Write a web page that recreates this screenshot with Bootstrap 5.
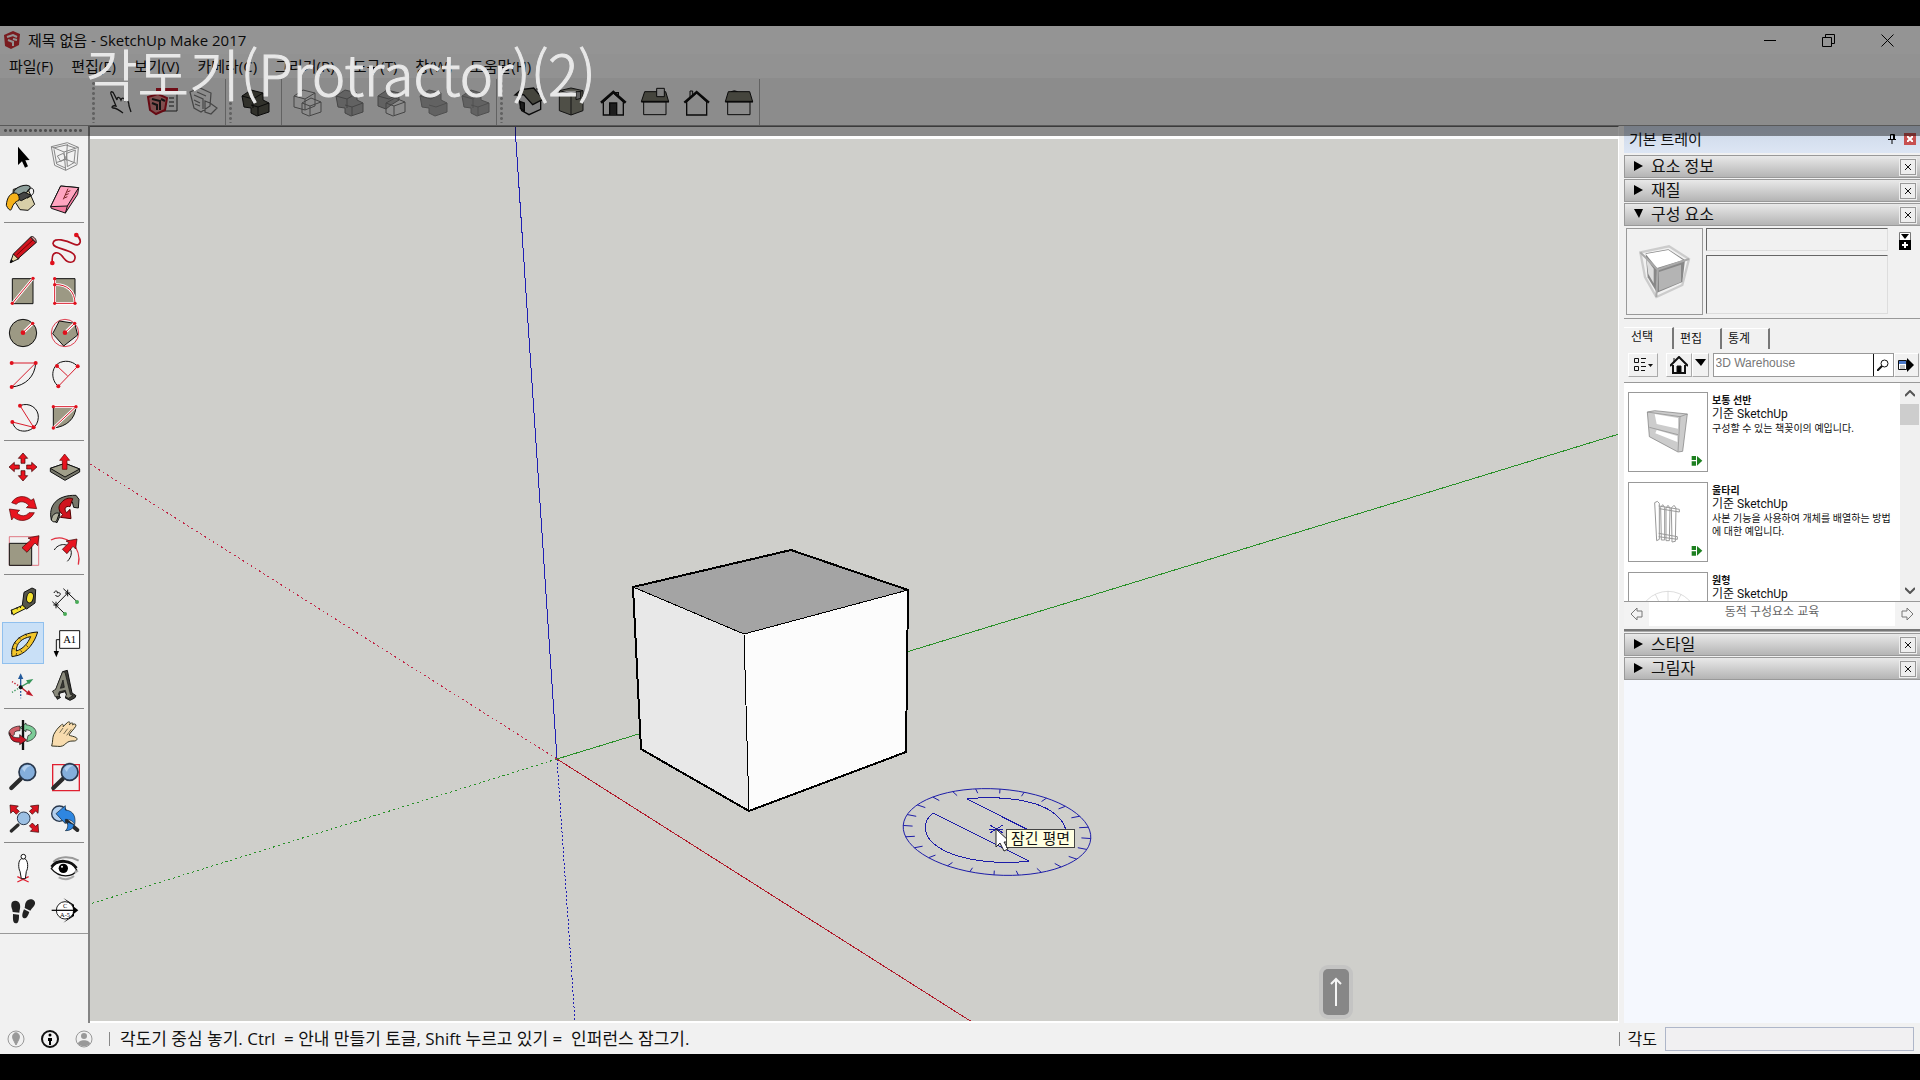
<!DOCTYPE html>
<html lang="ko">
<head>
<meta charset="utf-8">
<meta name="viewport" content="width=device-width, initial-scale=1">
<title>제목 없음 - SketchUp Make 2017</title>
<link href="https://cdn.jsdelivr.net/npm/bootstrap@5.3.0/dist/css/bootstrap.min.css" rel="stylesheet">
<style>
  body { font-family: "Open Sans", "Noto Sans CJK KR", sans-serif; font-size: 15px; line-height: 20px; color: #111; background: #000; }
  button { color: inherit; }
  svg { display: block; }
  .letterbox { height: 26px; }
  .app-window { background: #f1f1f1; min-height: 0; }
  .title-row { height: 28px; background: #fff; padding: 0 3px 0 4px; }
  .title-row .caption-btn { width: 59px; height: 28px; }
  .menu-row { height: 24px; background: #fcfcfc; }
  .menu-row a { color: #111; text-decoration: none; padding: 0 9px; white-space: nowrap; }
  .plain-btn { border: 0; background: none; padding: 0; display: flex; align-items: center; justify-content: center; }
  .tools-row { height: 48px; padding-left: 92px; border-bottom: 1px solid #999; }
  .tools-row .grip { width: 3px; height: 42px; margin: 0 4px 0 0; background: radial-gradient(circle, #aaa 1px, transparent 2px) 0 0 / 3px 5px; }
  .tools-row .bar { width: 1px; height: 46px; background: #aaa; }
  .tools-row .bar + .grip { margin-left: 3px; }
  .tools-row .bar-inner { margin: 0 4px 0 3px; }
  .tool-btn { width: 42px; height: 42px; }
  .tool-btn.picked { background: #c9e0f7; box-shadow: inset 0 0 0 1px #90c0ee; }
  .side-tools { width: 90px; border-right: 2px solid #848484; }
  .side-grip { height: 3px; margin: 3px 4px 4px 3px; background: radial-gradient(circle, #888 1px, transparent 2px) 0 0 / 5px 3px; }
  .side-set { width: 84px; margin-left: 2px; }
  .side-rule { height: 8px; padding: 2px 4px 0 4px; }
  .side-rule::before { content: ""; display: block; height: 1px; background: #888; }
  .side-end { border-bottom: 1px solid #999; height: 2px; }
  .scene { min-width: 0; background: #cfcfcb; border-top: 1px solid #666; border-right: 1px solid #fff; border-bottom: 2px solid #fff; overflow: hidden; }
  .scene > svg { width: 100%; height: 100%; }
  .hint { left: 916px; top: 702px; height: 19px; padding: 0 4px; border: 1px solid #444; background: #ffffe1; line-height: 17px; white-space: nowrap; }
  .key-cap { left: 1233px; bottom: 6px; width: 26px; height: 46px; border-radius: 5px; background: #878787; box-shadow: 0 0 0 4px #c4c4c3; }
  .tray { width: 296px; margin-left: 5px; background: #f1f1f1; }
  .tray-head { height: 27px; margin-bottom: 2px; padding: 0 4px 2px 5px; background: linear-gradient(#ccd7e8, #dde6f4); }
  .tray-head .pin-close { width: 12px; height: 12px; background: #c75050; }
  .fold { height: 23px; margin-bottom: 1px; padding: 0 4px 0 9px; border: 1px solid #999; border-right: 0; background: linear-gradient(#e9e9e9, #b4b4b4); }
  .fold .fold-name { gap: 8px; font-size: 16px; height: 21px; padding-bottom: 2px; }
  .fold .fold-x { width: 16px; height: 16px; border: 1px solid #999; background: #eee; box-shadow: 0 0 0 1px #eee; }
  .comp-info { height: 93px; padding: 2px 9px 4px 2px; gap: 3px; border-bottom: 1px solid #999; }
  .comp-thumb { width: 77px; height: 87px; border: 1px solid #999; }
  .sunk { border: 1px solid; border-color: #666 #ddd #ddd #666; background: #f1f1f1; border-radius: 0; resize: none; display: block; width: 100%; padding: 0 4px; }
  .tab-row { padding-top: 8px; height: 30px; gap: 1px; }
  .tab-row button { font-size: 12px; line-height: 16px; width: 47px; height: 21px; padding: 0 0 0 5px; text-align: left; border: 0; border-right: 2px solid #777; border-top: 1px solid #fff; background: #f1f1f1; }
  .tab-row button:first-child { width: 50px; padding: 0 0 3px 7px; height: 22px; }
  .find-row { height: 34px; padding: 4px 1px 0 4px; border-bottom: 1px solid #999; }
  .raised { height: 24px; border: 1px solid; border-color: #fff #aaa #aaa #fff; background: #f1f1f1; }
  .find-box { height: 24px; border: 1px solid #999; background: #fff; }
  .find-box input { width: 159px; height: 18px; border: 0; padding: 0 2px; font: 12px "Liberation Sans", sans-serif; color: #777; }
  .find-box button { width: 20px; border-left: 1px solid #111; height: 22px; }
  .models { height: 219px; overflow: hidden; background: #fff; border-bottom: 1px solid #999; }
  .model-list { padding: 9px 0 0 4px; }
  .model-row { height: 90px; gap: 4px; font-size: 10px; line-height: 13px; }
  .model-row .pic { width: 80px; height: 80px; border: 1px solid #999; flex: none; }
  .model-row .txt { width: 180px; padding-top: 2px; }
  .model-row b, .model-row span { display: block; }
  .model-row .kit { font-family: Roboto, "Noto Sans CJK KR", sans-serif; font-size: 12px; line-height: 15px; }
  .rail { width: 20px; background: #f0f0f0; }
  .rail .rail-thumb { height: 21px; background: #cdcdcd; margin-right: 1px; }
  .pager { height: 24px; background: #fff; font-size: 12px; color: #666; }
  .pager .plain-btn { width: 25px; height: 24px; background: #f3f3f3; }
  .tray-gap { height: 7px; padding-top: 3px; }
  .tray-gap::before { content: ""; display: block; height: 3px; border-top: 2px solid #777; border-bottom: 1px solid #aaa; }
  .tray-rest { background: #f5f8fe; }
  .status-row { height: 31px; padding: 0 6px 0 7px; font-size: 17px; }
  .status-row .tick-bar { width: 1px; height: 14px; background: #888; }
  .status-row .tip { white-space: pre; margin-left: 10px; }
  .status-row label { font-size: 16px; }
  .status-row input { width: 249px; height: 24px; border: 1px solid #aeb6c9; background: #f1f0f2; }
  .lesson { left: 0; right: 0; top: 26px; height: 110px; background: rgba(0,0,0,.42); pointer-events: none; }
  .lesson h1 { margin: 16px 0 0 86px; font: 300 56px/60px "Noto Sans CJK KR", sans-serif; color: #e8e8e8; -webkit-text-stroke: 1px #e8e8e8; }
</style>
<script src="https://cdn.jsdelivr.net/npm/bootstrap@5.3.0/dist/js/bootstrap.bundle.min.js"></script>
</head>
<body class="vh-100 d-flex flex-column overflow-hidden position-relative">
<div class="letterbox flex-shrink-0"></div>
<div class="app-window flex-grow-1 d-flex flex-column">

  <header class="flex-shrink-0">
    <div class="title-row d-flex align-items-center">
      <svg width="16" height="18" viewBox="0 0 16 18"><path d="M0 4 9 0l7 3-1 11-8 4-6-3z" fill="#d03036"/><path d="M3 6l6-2 4 2M4 9l5 2v4M9 8l4 1" stroke="#fff" stroke-width="2" fill="none"/></svg>
      <span class="ms-2">제목 없음 - SketchUp Make 2017</span>
      <div class="d-flex ms-auto">
        <button class="plain-btn caption-btn" aria-label="최소화"><svg width="12" height="12"><path d="M0 6.500h12" stroke="#000"/></svg></button>
        <button class="plain-btn caption-btn" aria-label="이전 크기로"><svg width="13" height="13" fill="none" stroke="#000"><path d="M.5 3.500h9v9h-9zM3.500 3.500v-3h9v9h-3"/></svg></button>
        <button class="plain-btn caption-btn" aria-label="닫기"><svg width="13" height="13" stroke="#000"><path d="M.5.5l12 12M12.500.5l-12 12"/></svg></button>
      </div>
    </div>
    <nav class="menu-row d-flex align-items-center">
      <a href="#">파일(F)</a><a href="#">편집(E)</a><a href="#">보기(V)</a><a href="#">카메라(C)</a><a href="#">그리기(R)</a><a href="#">도구(T)</a><a href="#">창(W)</a><a href="#">도움말(H)</a>
    </nav>
    <div class="tools-row d-flex align-items-center">
      <span class="grip"></span>
      <button class="plain-btn tool-btn" aria-label="상호 작용"><svg width="42" height="42" fill="none" stroke="#222" stroke-width="1.300"><path d="M24 32c-5-4-8-5-10-5s-1-3 3-2l-5-12c-1-3 2-3 3 0l3 6c0-4 3-3 4 0 1-3 4-2 4 1 3-2 4 2 4 5l2 6"/></svg></button>
      <button class="plain-btn tool-btn" aria-label="구성요소 옵션"><svg width="42" height="42"><path d="M16 8h20v22H22" fill="#eee" stroke="#333"/><path d="M15 7h22v5H15z" fill="#c01828"/><path d="M7 16l10-3 9 4-2 12-9 4-6-4z" fill="#d88" stroke="#b01020" stroke-width="2"/><path d="M11 18l8 2v9M11 22l5 2v5M20 18l4 2" stroke="#222" stroke-width="2" fill="none"/><path d="M28 17h5M28 21h5M28 25h5" stroke="#222"/></svg></button>
      <button class="plain-btn tool-btn" aria-label="구성요소 특성"><svg width="42" height="42" fill="none" stroke="#777" stroke-width="1.200"><path d="M7 11l10-4 11 5-1 13-9 6-7-4zM11 14l9 4v10M14 11l9 4M11 19l6 3M12 23l5 2M22 20l5 2 7 5-6 6-6-2z"/></svg></button>
      <span class="bar"></span><span class="grip"></span>
      <button class="plain-btn tool-btn" aria-label="외부 셸"><svg width="42" height="42" fill="#55554b" stroke="#111"><path d="M6 15l9-6 12 3v7l6 3v9l-12 4-6-3v-5l-7-1z"/><path d="M6 15l11 3 10-6M17 18v9M15 24l7 2 11-4M22 26v8" fill="none"/></svg></button>
      <span class="bar bar-inner"></span>
      <button class="plain-btn tool-btn" aria-label="교차"><svg width="42" height="42" fill="none" stroke="#777"><path d="M8 15l9-6 12 3v13l-10 4-11-3zM8 15l11 3 10-6M19 18v11M16 22l9-5 10 4v10l-12 4-7-3zM16 22l8 3 11-4M24 25v9"/></svg></button>
      <button class="plain-btn tool-btn" aria-label="결합"><svg width="42" height="42" fill="#aaa" stroke="#777"><path d="M8 15l9-6 12 3v7l6 3v9l-12 4-6-3v-5l-7-1z"/><path d="M8 15l11 3 10-6M19 18v9M17 24l7 2 11-4M24 26v8" fill="none"/></svg></button>
      <button class="plain-btn tool-btn" aria-label="빼기"><svg width="42" height="42" fill="none" stroke="#777"><path d="M8 15l9-6 12 3v7l-8 5-5 4-8-3z" fill="#aaa"/><path d="M8 15l11 3 10-6M16 22l9-5 10 4v10l-12 4-7-3zM16 22l8 3 11-4M24 25v9"/></svg></button>
      <button class="plain-btn tool-btn" aria-label="자르기"><svg width="42" height="42" fill="#aaa" stroke="#888"><path d="M8 15l9-6 12 3v7l6 3v9l-12 4-6-3v-5l-7-1z"/><path d="M8 15l11 3 10-6M17 24l7 2 11-4" fill="none"/></svg></button>
      <button class="plain-btn tool-btn" aria-label="분할"><svg width="42" height="42" fill="#aaa" stroke="#888"><path d="M8 15l9-6 10 3v7l8 3v9l-12 4-6-3v-5l-7-1z"/><path d="M8 15l11 3 8-6M19 18v9M17 24l7 2 11-4M24 26v8" fill="none"/></svg></button>
      <span class="bar"></span><span class="grip"></span>
      <button class="plain-btn tool-btn" aria-label="등각"><svg width="42" height="42" viewBox="78 66 126 126" stroke="#111" stroke-width="4"><path d="M110 105l12 50 22 12 35-16v-30l-25-22z" fill="#ddd"/><path d="M102 108l18-16 38-5 30 35-10 3-23 12-27-30-12 2z" fill="#77776a"/><path d="M166 90h10v16" fill="#ddd"/><path d="M118 128l12 4v24l-12-8z" fill="#333"/></svg></button>
      <button class="plain-btn tool-btn" aria-label="위"><svg width="42" height="42" viewBox="204 66 126 126" stroke="#222" stroke-width="3" fill="#88887a"><path d="M235 95l35-8 36 8v60l-36 13-35-13zM235 95l35 9 36-9M270 104v64"/><path d="M285 98h14v20l-14 4z" fill="#aaa"/></svg></button>
      <button class="plain-btn tool-btn" aria-label="앞"><svg width="42" height="42" viewBox="330 66 126 126" stroke="#111" stroke-width="4"><path d="M367 128v40h60v-40l-30-27z" fill="#eee"/><path d="M386 168v-36h21v36" fill="#333"/><path d="M404 104v-3h8v11" fill="none"/><path d="M360 131l37-32 37 32" fill="none" stroke-width="8"/></svg></button>
      <button class="plain-btn tool-btn" aria-label="오른쪽"><svg width="42" height="42" viewBox="456 66 126 126" stroke="#111" stroke-width="3"><path d="M488 128h67v39h-67z" fill="#eee"/><path d="M491 98h63l9 30h-82z" fill="#77776a"/><path d="M481 128h83" stroke-width="5"/><path d="M527 88h23v25h-23z" fill="#ddd"/></svg></button>
      <button class="plain-btn tool-btn" aria-label="뒤"><svg width="42" height="42" viewBox="582 66 126 126" stroke="#111" stroke-width="4"><path d="M617 128v40h60v-40l-30-27z" fill="#eee"/><path d="M627 114V96h8v12" fill="#ddd" stroke-width="3"/><path d="M610 131l37-32 37 32" fill="none" stroke-width="7"/></svg></button>
      <button class="plain-btn tool-btn" aria-label="왼쪽"><svg width="42" height="42" viewBox="708 66 126 126" stroke="#111" stroke-width="3"><path d="M740 128h67v39h-67z" fill="#eee"/><path d="M750 98q10-5 20 0" fill="#555"/><path d="M742 98h64l9 30h-82z" fill="#77776a"/><path d="M733 128h83" stroke-width="5"/></svg></button>
      <span class="bar"></span>
    </div>
  </header>

  <main class="d-flex flex-grow-1" style="min-height:0">
    <aside class="side-tools flex-shrink-0">
      <div class="side-grip"></div>
      <div class="side-set d-flex flex-wrap">
        <button class="plain-btn tool-btn" aria-label="선택"><svg width="42" height="42" viewBox="6 18 126 126"><path d="M54 50v55l12-11 9 19 9-4-8-18 13-1z"/></svg></button>
        <button class="plain-btn tool-btn" aria-label="구성 요소 만들기"><svg width="42" height="42" viewBox="132 18 126 126" fill="none" stroke="#888" stroke-width="3"><path d="M154 50l48-12 33 14-4 52-34 17-33-15zM154 50l38 16 43-14M192 66l5 55M160 54l38-9 28 9M162 58l8 44 26 12M202 42l-3 50M168 98l30-10 30 12M200 70l26-10-4 38-20 12zM172 78l18-8 8 14-16 10z"/></svg></button>
        <button class="plain-btn tool-btn" aria-label="페인트통"><svg width="42" height="42" viewBox="6 144 126 126" stroke="#111" stroke-width="3"><path d="M40 178l40-10 24 55-20 18-24-2-22-35z" fill="#d8cfa8"/><ellipse cx="66" cy="180" rx="26" ry="12" fill="#8ea09c" transform="rotate(-20 66 180)"/><path d="M42 202l30-16 22 10-30 16z" fill="#444"/><path d="M82 185c4-14 18-14 19-2s-12 16-19 22" fill="none"/><path d="M50 190c-18-6-30 14-31 36 6 14 14 18 16 10 4-14 14-24 21-24 4-8 0-18-6-22z" fill="#f6b21a"/></svg></button>
        <button class="plain-btn tool-btn" aria-label="지우개"><svg width="42" height="42" viewBox="132 144 126 126" stroke="#111" stroke-width="3"><path d="M152 230l30-62 54 5-3 20-37 56-42-14z" fill="#f47ba0"/><path d="M152 230l30-62 54 5-34 55z" fill="#ffa5c0"/><path d="M202 228l-6 22" fill="none"/><path d="M204 176l-14 32M211 182l-9 4M206 191l-9 4M202 200l-9 4" stroke="#722" fill="none"/></svg></button>
      </div>
      <div class="side-rule"></div>
      <div class="side-set d-flex flex-wrap">
        <button class="plain-btn tool-btn" aria-label="선"><svg width="42" height="42" viewBox="6 294 126 126" stroke="#111" stroke-width="3"><path d="M31 398l9-26 10 3 7 11z" fill="#e8d8a8"/><path d="M40 372l52-51 16 17-54 48z" fill="#d0141e"/><path d="M50 375l50-46" stroke="#700" fill="none"/><path d="M92 321c6-6 20 8 16 17z" fill="#e8a0a0"/><path d="M31 398l3-9 5 5z"/></svg></button>
        <button class="plain-btn tool-btn" aria-label="자유형"><svg width="42" height="42" viewBox="132 294 126 126"><path d="M157 398c-4-40 20-34 34-14 14 18 32 16 34 0 4-26-68-26-66-44 2-20 42-8 62 2s28-12 8-27" fill="none" stroke="#b01020" stroke-width="5"/><g fill="#e0101c"><circle cx="157" cy="399" r="7"/><circle cx="229" cy="315" r="7"/></g></svg></button>
        <button class="plain-btn tool-btn" aria-label="사각형"><svg width="42" height="42" viewBox="6 420 126 126"><path d="M37 446h62v75H37z" fill="#9c9984" stroke="#111" stroke-width="3"/><path d="M37 520l62-75" stroke="#fff" stroke-width="8"/><path d="M37 520l62-75" stroke="#d81c2c" stroke-width="3"/><g fill="#e0101c"><circle cx="37" cy="520" r="5"/><circle cx="99" cy="445" r="5"/></g></svg></button>
        <button class="plain-btn tool-btn" aria-label="회전된 사각형"><svg width="42" height="42" viewBox="132 420 126 126"><path d="M164 446h61v74h-61z" fill="#9c9984" stroke="#111" stroke-width="3"/><path d="M164 446v74h61c0-36-24-58-61-56" fill="none" stroke="#fff" stroke-width="8"/><path d="M164 446v74h61c0-36-24-58-61-56" fill="none" stroke="#d81c2c" stroke-width="3"/><g fill="#e0101c"><circle cx="164" cy="446" r="5"/><circle cx="164" cy="464" r="5"/><circle cx="164" cy="520" r="5"/><circle cx="225" cy="520" r="5"/></g></svg></button>
        <button class="plain-btn tool-btn" aria-label="원"><svg width="42" height="42" viewBox="6 546 126 126"><circle cx="69" cy="609" r="41" fill="#9c9984" stroke="#111" stroke-width="3"/><path d="M69 608l29-28" stroke="#fff" stroke-width="9"/><path d="M69 608l29-28" stroke="#d81c2c" stroke-width="3"/><g fill="#e0101c"><circle cx="69" cy="608" r="7"/><circle cx="98" cy="580" r="5"/></g></svg></button>
        <button class="plain-btn tool-btn" aria-label="다각형"><svg width="42" height="42" viewBox="132 546 126 126"><circle cx="195" cy="609" r="41" fill="none" stroke="#e04050" stroke-width="3"/><path d="M178 573l46 7 9 35-42 33-33-37z" fill="#9c9984" stroke="#111" stroke-width="3"/><path d="M195 608l29-28" stroke="#fff" stroke-width="9"/><path d="M195 608l29-28" stroke="#d81c2c" stroke-width="3"/><g fill="#e0101c"><circle cx="195" cy="608" r="7"/><circle cx="224" cy="580" r="5"/></g></svg></button>
        <button class="plain-btn tool-btn" aria-label="호"><svg width="42" height="42" viewBox="6 672 126 126"><path d="M107 699c-2 40-30 68-72 72" fill="none" stroke="#111" stroke-width="3"/><path d="M35 699h72l-72 72" fill="none" stroke="#d81c2c" stroke-width="3"/><g fill="#e0101c"><circle cx="35" cy="699" r="6"/><circle cx="107" cy="699" r="6"/><circle cx="35" cy="771" r="6"/></g></svg></button>
        <button class="plain-btn tool-btn" aria-label="2점 호"><svg width="42" height="42" viewBox="132 672 126 126"><path d="M175 769c-24-20-22-60 6-72 22-8 42 0 52 13" fill="none" stroke="#111" stroke-width="3"/><path d="M175 769l58-60M171 708l32 30" stroke="#d81c2c" stroke-width="3"/><g fill="#e0101c"><circle cx="175" cy="769" r="6"/><circle cx="233" cy="709" r="6"/><circle cx="171" cy="708" r="6"/></g></svg></button>
        <button class="plain-btn tool-btn" aria-label="3점 호"><svg width="42" height="42" viewBox="6 798 126 126"><path d="M60 827c28-12 56 8 55 35-1 30-28 44-48 41-14-2-24-8-30-27" fill="none" stroke="#111" stroke-width="3"/><path d="M60 827l41 65-64-16" fill="none" stroke="#d81c2c" stroke-width="3"/><g fill="#e0101c"><circle cx="60" cy="827" r="6"/><circle cx="101" cy="892" r="6"/><circle cx="37" cy="876" r="6"/></g></svg></button>
        <button class="plain-btn tool-btn" aria-label="부채꼴"><svg width="42" height="42" viewBox="132 798 126 126"><path d="M160 830h68c-2 36-28 60-68 64z" fill="#9c9984" stroke="#111" stroke-width="3"/><path d="M160 830h68l-68 64" fill="none" stroke="#fff" stroke-width="8"/><path d="M160 830h68l-68 64" fill="none" stroke="#d81c2c" stroke-width="3"/><g fill="#e0101c"><circle cx="160" cy="830" r="5"/><circle cx="228" cy="830" r="5"/><circle cx="160" cy="894" r="5"/></g></svg></button>
      </div>
      <div class="side-rule"></div>
      <div class="side-set d-flex flex-wrap">
        <button class="plain-btn tool-btn" aria-label="이동"><svg width="42" height="42" viewBox="6 48 126 126" fill="#e8141f" stroke="#300" stroke-width="2"><path d="M69 69l14 16h-8v15h-12V85h-8zM69 153l14-16h-8v-15h-12v15h-8zM27 111l16-14v8h15v12H43v8zM111 111l-16-14v8H80v12h15v8z"/></svg></button>
        <button class="plain-btn tool-btn" aria-label="밀기/끌기"><svg width="42" height="42" viewBox="132 48 126 126" stroke="#111" stroke-width="3"><path d="M151 115l44-15 44 17v9l-44 25-44-26z" fill="#77776a"/><path d="M151 115l44-15 44 17-44 24z" fill="#a09f8a"/><path d="M194 72l15 19h-8v27h-14V91h-8z" fill="#e8141f" stroke="#600" stroke-width="2"/></svg></button>
        <button class="plain-btn tool-btn" aria-label="회전"><svg width="42" height="42" viewBox="6 174 126 126" fill="#e8141f" stroke="#500" stroke-width="2"><path d="M35 218c12-22 42-24 58-7l8-5 9 30-31-3 7-7c-10-13-30-14-37-3zM103 248c-12 26-44 30-62 14l-6 8-7-33 31 4-8 8c12 12 28 10 36-1z"/></svg></button>
        <button class="plain-btn tool-btn" aria-label="따라가기"><svg width="42" height="42" viewBox="132 174 126 126" stroke="#111" stroke-width="3"><path d="M154 270c-10-42 16-76 74-74l9 12-2 26-14-2-4-16c-28 2-40 20-38 44l-8 18z" fill="#77776a"/><path d="M184 218c10-12 22-16 34-12l-8 24c-14-4-20 8-10 18l10-10 3 28-32-4 7-8c-14-12-14-26-4-36z" fill="#d0141e" stroke="#500"/><path d="M154 270c2-16 12-24 24-20l-8 22c-6 6-12 4-16-2z" fill="#b3b29f"/></svg></button>
        <button class="plain-btn tool-btn" aria-label="배율"><svg width="42" height="42" viewBox="6 300 126 126"><path d="M28 320h88v86H28z" fill="none" stroke="#d84050" stroke-width="2"/><path d="M28 340h67v66H28z" fill="#9c9984" stroke="#111" stroke-width="3"/><path d="M117 317l-4 30-8-8-24 28-15-14 27-24-9-5z" fill="#e8141f" stroke="#300" stroke-width="2"/></svg></button>
        <button class="plain-btn tool-btn" aria-label="오프셋"><svg width="42" height="42" viewBox="132 300 126 126"><path d="M153 330c44-24 94 22 82 74" fill="none" stroke="#e03040" stroke-width="4"/><path d="M163 360c10-20 48-26 51 8 0 12-6 20-12 26" fill="none" stroke="#111" stroke-width="3"/><path d="M231 327l-4 30-8-8-18 22-14-13 20-20-9-5z" fill="#e8141f" stroke="#300" stroke-width="2"/></svg></button>
      </div>
      <div class="side-rule"></div>
      <div class="side-set d-flex flex-wrap">
        <button class="plain-btn tool-btn" aria-label="줄자"><svg width="42" height="42" viewBox="6 447 126 126" stroke="#111" stroke-width="3"><path d="M72 484l24-13 11 5-2 40-25 18-13-12z" fill="#55554b"/><ellipse cx="90" cy="500" rx="10" ry="16" fill="#f5e230" transform="rotate(12 90 500)"/><path d="M33 538l35-15 10 9-30 15-8 5z" fill="#f5e230"/><path d="M35 536v14M50 530l2 5M60 526l2 5"/></svg></button>
        <button class="plain-btn tool-btn" aria-label="치수"><svg width="42" height="42" viewBox="132 447 126 126" fill="none" stroke="#111" stroke-width="3"><path d="M157 512l37 36M190 473l40 38M168 522l35-36M160 522h16M168 512v20M195 486h16M203 476v20"/><path d="M162 486c2-8 12-8 10 0 8-4 12 4 6 8-4 4-10 2-12-2" stroke-width="3"/><g fill="#4aac58" stroke="none"><circle cx="195" cy="549" r="6"/><circle cx="231" cy="513" r="6"/></g></svg></button>
        <button class="plain-btn tool-btn picked" aria-label="각도기"><svg width="42" height="42" viewBox="6 573 126 126" stroke="#111" stroke-width="3"><path d="M36 677c-6-36 16-70 77-74-10 34-32 60-58 70zM49 660c20-6 34-22 43-43-26 4-44 20-43 43z" fill="#f2c62c" fill-rule="evenodd"/><path d="M36 652l9 2M42 634l8 5M56 618l6 7M76 608l4 7M48 674l2-8M66 664l-4-6M84 648l-5-5" stroke-width="2"/></svg></button>
        <button class="plain-btn tool-btn" aria-label="텍스트"><svg width="42" height="42" viewBox="132 573 126 126"><path d="M179 599h60v53h-60z" fill="#fff" stroke="#111" stroke-width="3"/><path d="M179 626h-10v36" fill="none" stroke="#111" stroke-width="3"/><path d="M161 660h16l-8 19z"/><text x="209" y="635" font-family="Liberation Serif, serif" font-size="32" text-anchor="middle">A1</text></svg></button>
        <button class="plain-btn tool-btn" aria-label="축"><svg width="42" height="42" viewBox="6 699 126 126" fill="none" stroke-width="4"><path d="M62 768v-30" stroke="#235a9c"/><path d="M54 744l8-17 8 17z" fill="#235a9c"/><path d="M62 768l24-14" stroke="#37965a"/><path d="M78 748l22-4-13 16z" fill="#37965a"/><path d="M62 768l22 18" stroke="#c01828"/><path d="M78 790l8-13 14 19z" fill="#c01828"/><path d="M62 770v32" stroke="#235a9c" stroke-dasharray="5 5"/><path d="M62 768l-26-16" stroke="#c01828" stroke-dasharray="4 5"/><path d="M62 768l-26 16" stroke="#37965a" stroke-dasharray="4 5"/><circle cx="62" cy="769" r="6" fill="#111"/></svg></button>
        <button class="plain-btn tool-btn" aria-label="3D 텍스트"><svg width="42" height="42" viewBox="132 699 126 126" stroke="#111" stroke-width="3"><path d="M166 790l-8-8 9-6 21-54 14-4 14 68 12 8-4 7-14 7-14-7 4-7-4-12-16 4-4 9 6 4-10 6z" fill="#3c3c36"/><path d="M158 780l9-5 21-53 7 2 16 66 8 4-14 8-10-6 5-4-4-14-18 4-3 8 5 4-14 4zM181 772l12-3-4-22z" fill="#8a8a7c" fill-rule="evenodd" stroke-width="2"/></svg></button>
      </div>
      <div class="side-rule"></div>
      <div class="side-set d-flex flex-wrap">
        <button class="plain-btn tool-btn" aria-label="궤도"><svg width="42" height="42" viewBox="6 42 126 126" stroke="#111" stroke-width="2"><path d="M60 78c-32 2-42 22-26 34l10-10c-4-6 4-10 16-10z" fill="#d06068"/><path d="M78 74v-5l-18 14 18 12v-6c18 2 22 12 6 18l-4 18c34-6 42-44-2-51z" fill="#7ccc98"/><path d="M69 60v90" stroke-width="7"/><path d="M29 98c4 14 20 16 30 15v-9l21 16-21 14v-7c-18 0-30-6-30-29z" fill="#c81828"/></svg></button>
        <button class="plain-btn tool-btn" aria-label="이동 보기"><svg width="42" height="42" viewBox="132 42 126 126"><path d="M155 138c4-14 2-24 6-34 6-12 14-22 22-28 4-6 9-2 6 4l14-13c6-4 10 2 5 7 8-8 13-6 10 1 6-6 12-2 9 4-6 10-16 18-20 26 6 4 14 3 22 8 6 6-2 11-10 10-10 0-14 2-20 6-6 8-16 12-26 10z" fill="#f8dcae" stroke="#332" stroke-width="3"/><path d="M189 84l-10 14M203 86l-12 16M214 88l-14 18" stroke="#332" stroke-width="2"/></svg></button>
        <button class="plain-btn tool-btn" aria-label="확대/축소"><svg width="42" height="42" viewBox="6 168 126 126"><path d="M34 264l28-27" stroke="#2a2a2a" stroke-width="13" stroke-linecap="round"/><circle cx="82" cy="216" r="25" fill="#84aedb" stroke="#28374c" stroke-width="5"/><path d="M66 206c6-12 20-14 28-8-10 0-18 8-20 18z" fill="#b4d0ee"/></svg></button>
        <button class="plain-btn tool-btn" aria-label="확대/축소 창"><svg width="42" height="42" viewBox="132 168 126 126"><path d="M158 194h80v78h-80z" fill="none" stroke="#e02030" stroke-width="4"/><path d="M160 264l28-27" stroke="#2a2a2a" stroke-width="13" stroke-linecap="round"/><circle cx="209" cy="216" r="25" fill="#84aedb" stroke="#28374c" stroke-width="5"/><path d="M193 206c6-12 20-14 28-8-10 0-18 8-20 18z" fill="#b4d0ee"/></svg></button>
        <button class="plain-btn tool-btn" aria-label="범위 확대"><svg width="42" height="42" viewBox="6 294 126 126"><g fill="#d81420" stroke="#300" stroke-width="2"><path d="M30 315l25 3-7 7 10 9-9 9-10-10-7 7zM116 315l-25 3 7 7-10 9 9 9 10-10 7 7zM116 397l-25-3 7-7-10-9 9-9 10 10 7-7z"/></g><path d="M34 393l20-18" stroke="#2a2a2a" stroke-width="10" stroke-linecap="round"/><circle cx="71" cy="355" r="19" fill="#9cc0e4" stroke="#28374c" stroke-width="3"/></svg></button>
        <button class="plain-btn tool-btn" aria-label="이전"><svg width="42" height="42" viewBox="132 294 126 126"><circle cx="178" cy="341" r="23" fill="#b4d0ee" stroke="#28374c" stroke-width="4"/><path d="M196 360l36 30" stroke="#2a2a2a" stroke-width="12" stroke-linecap="round"/><path d="M168 341l28-24v13c26 2 32 22 28 44-6-12-14-16-28-16v13zM196 392c8-6 8-16 6-26l20 8c-2 12-12 18-26 18z" fill="#2e86e0" stroke="#123" stroke-width="2"/></svg></button>
      </div>
      <div class="side-rule"></div>
      <div class="side-set d-flex flex-wrap">
        <button class="plain-btn tool-btn" aria-label="카메라 배치"><svg width="42" height="42" viewBox="6 444 126 126"><path d="M52 546l34-16M52 530l34 16" stroke="#e02030" stroke-width="4"/><path d="M65 476c-12 4-10 30-5 38l4 22h12l3-22c6-8 6-34-5-38z" fill="#fff" stroke="#111" stroke-width="3"/><circle cx="70" cy="470" r="7" fill="#fff" stroke="#111" stroke-width="3"/></svg></button>
        <button class="plain-btn tool-btn" aria-label="둘러보기"><svg width="42" height="42" viewBox="132 444 126 126"><path d="M160 486c20-18 50-18 76-4" fill="none" stroke="#999" stroke-width="6"/><path d="M154 506c16-28 60-26 76 4-10 22-52 26-76-4z" fill="#fff" stroke="#111" stroke-width="4"/><path d="M154 500c20-26 60-20 76 4" fill="none" stroke="#111" stroke-width="7"/><circle cx="190" cy="505" r="14"/><circle cx="186" cy="500" r="3" fill="#fff"/><path d="M176 532c16 8 34 6 46-4M224 518l10-6" stroke="#aaa" stroke-width="6" fill="none"/></svg></button>
        <button class="plain-btn tool-btn" aria-label="걷기"><svg width="42" height="42" viewBox="6 570 126 126"><path d="M34 612c2-14 24-12 26 2 2 10-2 16-2 24l-20-2c0-8-6-14-4-24zM39 642l18 2c0 12 0 26-10 26-10-1-8-16-8-28zM78 606c8-14 30-8 27 6-3 10-10 12-14 20l-17-8c2-8 0-12 4-18zM72 628l16 8c-4 14-10 22-18 18-6-4-2-16 2-26z" fill="#222"/></svg></button>
        <button class="plain-btn tool-btn" aria-label="단면"><svg width="42" height="42" viewBox="132 570 126 126"><path d="M190 594l32 20v34l-32 20 16-14v-46z"/><circle cx="195" cy="631" r="26" fill="#fff" stroke="#222" stroke-width="3"/><path d="M155 631h76" stroke="#111" stroke-width="4"/><path d="M220 619l15 12-15 12z"/><g font-family="Liberation Serif, serif" font-size="19" text-anchor="middle"><text x="195" y="625">C</text><text x="195" y="650">A-5</text></g></svg></button>
      </div>
      <div class="side-end"></div>
    </aside>

    <section class="scene flex-grow-1 position-relative">
      <svg viewBox="90 127 1528 894" preserveAspectRatio="xMinYMin slice" shape-rendering="crispEdges" fill="none">
        <path d="M90 127h1530v9H90z" fill="#efefef"/>
        <path d="M90 136h1530v3H90z" fill="#fdfdfd"/>
        <g stroke-width="1">
          <path d="M515 127l42 632" stroke="#2020b4"/>
          <path d="M557 759l18 262" stroke="#2020b4" stroke-dasharray="2 2"/>
          <path d="M557 759l415 263" stroke="#b01828"/>
          <path d="M90 464l467 295" stroke="#c02848" stroke-dasharray="2 3"/>
          <path d="M557 759L1619 434" stroke="#289028"/>
          <path d="M557 759L90 904" stroke="#289028" stroke-dasharray="2 3"/>
        </g>
        <path d="M633 587l158-37 117 40-164 44z" fill="#a4a4a4"/>
        <path d="M633 587l111 47 5 177-108-62z" fill="#e8e8e8"/>
        <path d="M744 634l164-44-2 162-157 59z" fill="#fcfcfc"/>
        <path d="M633 587l111 47 164-44M744 634l5 177" stroke="#000"/>
        <path d="M633 587l158-37 117 40-2 162-157 59-108-62z" stroke="#000" stroke-width="2"/>
        <g stroke="#1c1ca8">
          <g transform="translate(997 832) rotate(4) scale(94 43)">
            <circle r="1" vector-effect="non-scaling-stroke"/>
            <g id="ticks">
              <path d="M1 0H.9M.966.259L.869.233M.866.5L.779.45M.707.707L.636.636M.5.866L.45.779M.259.966L.233.869" vector-effect="non-scaling-stroke"/>
              <path d="M0 1V.9M-.259.966L-.233.869M-.5.866L-.45.779M-.707.707L-.636.636M-.866.5L-.779.45M-.966.259L-.869.233" vector-effect="non-scaling-stroke"/>
            </g>
            <use href="#ticks" transform="rotate(180)"/>
          </g>
          <path d="M933 813C924 820 922 832 932 842C948 858 990 866 1029 861z"/>
          <path d="M967 799C1000 795 1040 800 1056 815C1066 823 1069 834 1062 847z"/>
          <path d="M990 825l13 8M1003 825l-13 8M989 829h14"/>
        </g>
        <path d="M996 829v18l4-4 4 8 4-2-4-7h6z" fill="#fff" stroke="#222" shape-rendering="auto"/>
      </svg>
      <div class="hint position-absolute">잠긴 평면</div>
      <div class="key-cap position-absolute d-flex align-items-center justify-content-center"><svg width="12" height="30" fill="none" stroke="#f4f4f4" stroke-width="2"><path d="M6 2v27M1 7l5-5 5 5"/></svg></div>
    </section>

    <aside class="tray flex-shrink-0 d-flex flex-column">
      <div class="tray-head d-flex align-items-center">
        <span>기본 트레이</span>
        <button class="plain-btn ms-auto me-2" aria-label="자동 숨김"><svg width="8" height="10" fill="none" stroke="#000"><path d="M2.500 5V.5h4V5M0 5.500h8M4 6v4M5.500 1v4"/></svg></button>
        <button class="plain-btn pin-close" aria-label="트레이 닫기"><svg width="6" height="6" stroke="#fff" stroke-width="2"><path d="M0 0l6 6M6 0L0 6"/></svg></button>
      </div>
      <div class="fold d-flex align-items-center"><button class="plain-btn fold-name"><svg width="9" height="10"><path d="M0 0l9 5-9 5z"/></svg>요소 정보</button><button class="plain-btn fold-x ms-auto" aria-label="닫기"><svg width="6" height="6" stroke="#111"><path d="M0 0l6 6M6 0L0 6"/></svg></button></div>
      <div class="fold d-flex align-items-center"><button class="plain-btn fold-name"><svg width="9" height="10"><path d="M0 0l9 5-9 5z"/></svg>재질</button><button class="plain-btn fold-x ms-auto" aria-label="닫기"><svg width="6" height="6" stroke="#111"><path d="M0 0l6 6M6 0L0 6"/></svg></button></div>
      <div class="fold mb-0 d-flex align-items-center"><button class="plain-btn fold-name"><svg width="9" height="9"><path d="M0 0h9L5 9z"/></svg>구성 요소</button><button class="plain-btn fold-x ms-auto" aria-label="닫기"><svg width="6" height="6" stroke="#111"><path d="M0 0l6 6M6 0L0 6"/></svg></button></div>

      <div class="comp-info d-flex">
        <div class="comp-thumb flex-shrink-0 d-flex align-items-center justify-content-center"><svg width="54" height="56" viewBox="116 370 160 168"><path d="M122 395l86-18 60 38-20 78-78 36-34-60z" fill="none" stroke="#ccc" stroke-width="7"/><path d="M138 398l68-12 50 32-8 66-76 32-28-46z" fill="#888"/><path d="M138 400l68-12 44 30-78 24z" fill="#fff"/><path d="M178 454l66-22v52l-66 26z" fill="#b4b4b4"/><path d="M140 414l22 30v44l-16-28z" fill="#ddd"/><path d="M122 395l52 52 94-32M174 447l-4 82" fill="none" stroke="#aaa" stroke-width="6"/></svg></div>
        <div class="flex-grow-1 d-flex flex-column gap-1">
          <input class="sunk" style="height:23px" aria-label="구성 요소 이름">
          <textarea class="sunk flex-grow-1" aria-label="설명"></textarea>
        </div>
        <button class="plain-btn align-items-start pt-1 ms-2" aria-label="보조 선택 창"><svg width="12" height="18"><path d="M.5.5h11v17H.5z" fill="#fff" stroke="#777"/><path d="M2 2h8L6 7z"/><path d="M0 8h12v10H0z"/><path d="M3 13h6M6 10v6" stroke="#fff" stroke-width="2"/></svg></button>
      </div>
      <div class="tab-row d-flex align-items-end"><button>선택</button><button>편집</button><button>통계</button></div>
      <div class="find-row d-flex align-items-start">
        <button class="plain-btn raised" style="width:31px" aria-label="보기 옵션"><svg width="20" height="16" fill="none" stroke="#111" stroke-width="1"><path d="M1.500 1.500h4v4h-4zM1.500 9.500h4v4h-4zM8 1.500h5M8 5.500h4M8 9.500h5M8 13.500h4"/><path d="M15 7h5l-2.500 3z" fill="#111" stroke="none"/></svg></button>
        <button class="plain-btn raised ms-2" style="width:26px" aria-label="모델 내"><svg width="18" height="18"><path d="M0 10l9-9 9 9" fill="none" stroke="#111" stroke-width="2"/><path d="M3 9v8h12V9" fill="none" stroke="#111" stroke-width="2"/><path d="M7 10h4v7H7zM4 2v5" stroke="#111"/></svg></button>
        <button class="plain-btn raised" style="width:17px" aria-label="탐색"><svg width="11" height="12"><path d="M0 0h11L6 7z"/></svg></button>
        <div class="find-box d-flex ms-1 flex-grow-1"><input value="3D Warehouse" aria-label="3D Warehouse 검색"><button class="plain-btn" aria-label="검색"><svg width="12" height="12" fill="none" stroke="#111"><circle cx="7.500" cy="4.500" r="3.500"/><path d="M5 7l-5 5" stroke-width="2"/></svg></button></div>
        <button class="plain-btn raised" style="width:26px" aria-label="세부 정보"><svg width="16" height="14"><path d="M9 0l7 7-7 7z"/><path d="M.5 2.500h8v9h-8z" fill="#fff" stroke="#111"/><path d="M1 3h7v3H1z" fill="#4a78c8"/><path d="M2 8h5M2 10h5" stroke="#888"/></svg></button>
      </div>
      <div class="models d-flex flex-shrink-0">
        <div class="model-list flex-grow-1">
          <div class="model-row d-flex"><div class="pic"><svg width="78" height="78" viewBox="87 219 234 234"><path d="M142 276l22-4 98 10-14 112-14 2-86-46z" fill="#ccc" stroke="#777" stroke-width="2"/><path d="M164 282l70 12v32l-64-14zM170 330l62 18v18l-66-26z" fill="#fff"/><path d="M142 276l98 14 22-8M240 290l-6 104M148 322l86 22" fill="none" stroke="#888" stroke-width="2"/><path d="M275 408h13v12h-13zM275 424h13v13h-13zM291 408l16 14-16 15z" fill="#1e8020"/></svg></div><div class="txt"><b>보통 선반</b><span class="kit">기준 SketchUp</span><span>구성할 수 있는 책꽂이의 예입니다.</span></div></div>
          <div class="model-row d-flex"><div class="pic"><svg width="78" height="78" viewBox="87 9 234 234"><path d="M164 68l8-4 6 6v108l-8 4zM182 82l6-8 6 8v98h-10zM198 84l6-8 6 8-2 98h-10zM214 84l8-8 6 8-2 100-10 2zM176 78l62 10v8l-60-10M176 160l56 10v8l-56-8" fill="none" stroke="#999" stroke-width="3"/><path d="M275 198h13v12h-13zM275 214h13v13h-13zM291 198l16 14-16 15z" fill="#1e8020"/></svg></div><div class="txt"><b>울타리</b><span class="kit">기준 SketchUp</span><span>사본 기능을 사용하여 개체를 배열하는 방법에 대한 예입니다.</span></div></div>
          <div class="model-row d-flex"><div class="pic"><svg width="78" height="78" viewBox="87 279 234 234" fill="none" stroke="#ccc" stroke-width="2"><circle cx="204" cy="422" r="88"/><path d="M204 334v88M166 343l38 79M243 343l-39 79M136 368l68 54M272 368l-68 54"/></svg></div><div class="txt"><b>원형</b><span class="kit">기준 SketchUp</span></div></div>
        </div>
        <div class="rail d-flex flex-column">
          <button class="plain-btn" style="height:21px" aria-label="위로"><svg width="10" height="7" fill="none" stroke="#555" stroke-width="2"><path d="M0 6l5-5 5 5"/></svg></button>
          <div class="rail-thumb"></div>
          <button class="plain-btn mt-auto" style="height:21px" aria-label="아래로"><svg width="10" height="7" fill="none" stroke="#555" stroke-width="2"><path d="M0 1l5 5 5-5"/></svg></button>
        </div>
      </div>
      <div class="pager d-flex justify-content-between flex-shrink-0">
        <button class="plain-btn" aria-label="이전 모음"><svg width="13" height="14" fill="none" stroke="#777"><path d="M1 7l6-6v3h5v6H7v3z"/></svg></button>
        <span>동적 구성요소 교육</span>
        <button class="plain-btn" aria-label="다음 모음"><svg width="13" height="14" fill="none" stroke="#777"><path d="M12 7L6 1v3H1v6h5v3z"/></svg></button>
      </div>
      <div class="tray-gap"></div>
      <div class="fold d-flex align-items-center"><button class="plain-btn fold-name"><svg width="9" height="10"><path d="M0 0l9 5-9 5z"/></svg>스타일</button><button class="plain-btn fold-x ms-auto" aria-label="닫기"><svg width="6" height="6" stroke="#111"><path d="M0 0l6 6M6 0L0 6"/></svg></button></div>
      <div class="fold mb-0 d-flex align-items-center"><button class="plain-btn fold-name"><svg width="9" height="10"><path d="M0 0l9 5-9 5z"/></svg>그림자</button><button class="plain-btn fold-x ms-auto" aria-label="닫기"><svg width="6" height="6" stroke="#111"><path d="M0 0l6 6M6 0L0 6"/></svg></button></div>
      <div class="tray-rest flex-grow-1"></div>
    </aside>
  </main>

  <footer class="status-row d-flex align-items-center flex-shrink-0">
    <svg width="18" height="18" fill="none" stroke="#999"><circle cx="9" cy="9" r="8"/><path d="M9 15C6 9 5 8 6 5s5-3 6 0 0 4-3 10z" fill="#999"/></svg>
    <svg class="ms-3" width="18" height="18"><circle cx="9" cy="9" r="8" fill="none" stroke="#111" stroke-width="2"/><circle cx="9" cy="5" r="1.500"/><path d="M7 8h4v3h-1v4H8v-4H7z"/></svg>
    <svg class="ms-3" width="18" height="18"><circle cx="9" cy="9" r="8" fill="none" stroke="#999"/><circle cx="9" cy="6" r="3" fill="#999"/><path d="M3 14c0-5 12-5 12 0-3 3-9 3-12 0z" fill="#999"/></svg>
    <span class="tick-bar ms-3"></span>
    <span class="tip">각도기 중심 놓기. Ctrl  = 안내 만들기 토글, Shift 누르고 있기 =  인퍼런스 잠그기.</span>
    <span class="tick-bar ms-auto me-2"></span>
    <label for="angle" class="me-2">각도</label>
    <input id="angle" type="text">
  </footer>
</div>
<div class="letterbox flex-shrink-0"></div>
<div class="lesson position-absolute"><h1>각도기(Protractor)(2)</h1></div>
</body>
</html>
